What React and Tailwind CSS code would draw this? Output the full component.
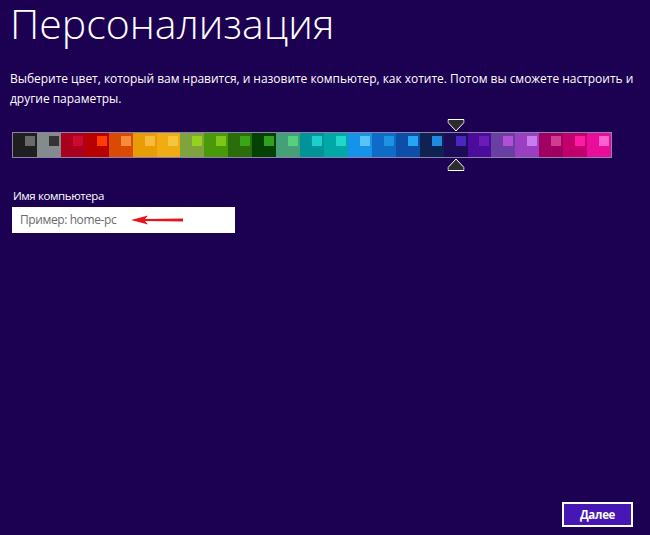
import React from 'react';

const colors = [
  { bg: '#1f1f1f', sq: '#6a6a6a' },
  { bg: '#858a8c', sq: '#333333' },
  { bg: '#a8001e', sq: '#cc0a2e' },
  { bg: '#b80000', sq: '#ff3d00' },
  { bg: '#d94a05', sq: '#f78c3a' },
  { bg: '#e89d06', sq: '#f7bb3c' },
  { bg: '#f1ac14', sq: '#f7c53b' },
  { bg: '#7fa33e', sq: '#93d31a' },
  { bg: '#4a990a', sq: '#7dc61a' },
  { bg: '#2a6d0a', sq: '#38a615' },
  { bg: '#044204', sq: '#2fa11e' },
  { bg: '#45a07a', sq: '#55d07c' },
  { bg: '#00949a', sq: '#1bd0cc' },
  { bg: '#00a9a8', sq: '#20d7cd' },
  { bg: '#1592ea', sq: '#58c5f6' },
  { bg: '#0e6cc8', sq: '#1b95e2' },
  { bg: '#0d4fa6', sq: '#25a5f6' },
  { bg: '#0f2352', sq: '#1e8be0' },
  { bg: '#1d0c58', sq: '#4b27c2', selected: true },
  { bg: '#4c0c9b', sq: '#6b1cb6' },
  { bg: '#6a3ea2', sq: '#b44ed8' },
  { bg: '#9a3ec2', sq: '#c97cee' },
  { bg: '#a10062', sq: '#d03c8f' },
  { bg: '#c2006d', sq: '#ff1aa1' },
  { bg: '#ea0c9b', sq: '#ff61d1' },
];

const Pointer = ({ up }) => (
  <svg width="17" height="13" viewBox="0 0 17 13" className={up ? 'rotate-180' : ''}>
    <polygon points="0.5,0.5 16.5,0.5 16.5,3.5 8.5,12 0.5,3.5" fill="#2b2b2b" stroke="#ffffff" strokeWidth="1" />
  </svg>
);

const App = () => {
  return (
    <div
      className="h-[535px] w-[650px] bg-[#1c0052] text-white flex flex-col overflow-hidden"
      style={{ fontFamily: '"Open Sans", "Noto Sans", sans-serif' }}
    >
      <h1 className="pl-[10px] text-[41px] leading-[47px] font-light">
        Персонализация
      </h1>

      <p className="mt-[22px] pl-[10px] text-[12px] leading-[20px] tracking-[-0.03px] whitespace-nowrap">
        Выберите цвет, который вам нравится, и назовите компьютер, как хотите. Потом вы сможете настроить и
        <br />
        другие параметры.
      </p>

      <div className="mt-[23px] ml-[12px] w-[600px] h-[26px] border border-[#8b82a8] flex">
        {colors.map((c, i) => (
          <div key={i} className="relative flex-1 h-full flex items-start justify-end pr-[2px] pt-[3px]" style={{ backgroundColor: c.bg }}>
            <div className="w-[10px] h-[10px]" style={{ backgroundColor: c.sq }} />
            {c.selected && (
              <>
                <div className="absolute -top-[14px] left-1/2 -translate-x-1/2 flex">
                  <Pointer />
                </div>
                <div className="absolute -bottom-[14px] left-1/2 -translate-x-1/2 flex">
                  <Pointer up />
                </div>
              </>
            )}
          </div>
        ))}
      </div>

      <label className="mt-[29px] pl-[13px] text-[11.5px] leading-[18px] tracking-[-0.4px]">Имя компьютера</label>

      <div className="mt-[2px] ml-[12px] w-[223px] h-[26px] bg-white flex items-center pl-[8px]">
        <span className="w-[111px] text-[12px] tracking-[-0.4px] text-[#6b6b6b]">Пример: home-pc</span>
        <svg width="52" height="10" viewBox="0 0 52 10">
          <polygon points="0,5 17,0.5 14,4 52,3.6 52,6.4 14,6 17,9.5" fill="#e8141b" />
        </svg>
      </div>

      <div className="mt-auto flex justify-end pr-[17px] pb-[8px]">
        <button className="w-[71px] h-[25px] bg-[#4617b4] border-2 border-white text-white text-[11.5px] tracking-[-0.3px] font-bold leading-none">
          Далее
        </button>
      </div>
    </div>
  );
};

export default App;
